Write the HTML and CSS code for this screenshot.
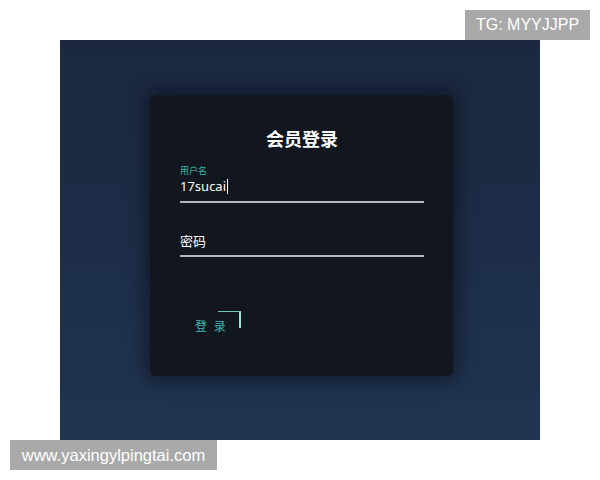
FILE: index.html
```html
<!DOCTYPE html>
<html lang="zh">
<head>
<meta charset="utf-8">
<link rel="stylesheet" href="styles.css">
</head>
<body>
<div class="page">
  <div class="panel">
    <div class="card">
      <h1 class="title">会员登录</h1>
      <div class="field">
        <div class="label">用户名</div>
        <div class="value value-user">17sucai<span class="caret"></span></div>
      </div>
      <div class="field field-pw">
        <div class="value">密码</div>
      </div>
      <div class="btn">
        <span class="btn-text">登 录</span>
        <span class="corner"></span>
      </div>
    </div>
  </div>
  <div class="wm wm-tg">TG: MYYJJPP</div>
  <div class="wm wm-url">www.yaxingylpingtai.com</div>
</div>
</body>
</html>
```

FILE: styles.css
```css
html, body { margin: 0; padding: 0; background: #ffffff; }
body { font-family: "Noto Sans CJK SC", "Noto Sans", sans-serif; }
.page { position: relative; width: 600px; height: 480px; padding: 40px 0 0 60px; box-sizing: border-box; }
.panel {
  width: 480px; height: 400px; box-sizing: border-box;
  padding: 55px 0 0 90px;
  background: linear-gradient(180deg, #1b2840 0%, #1d2d47 50%, #203450 100%);
}
.card {
  width: 303px; height: 281px; box-sizing: border-box;
  padding: 28px 29px 0 30px;
  background: #11161f;
  border-radius: 6px;
  box-shadow: 0 0 18px 4px rgba(8, 10, 16, 0.55);
}
.title { margin: 0; text-align: center; color: #ffffff; font-size: 18px; font-weight: 700; line-height: 30px; }
.field { margin-top: 12px; border-bottom: 2px solid #b6b8be; padding-bottom: 6px; }
.label { color: #3fb8b0; font-size: 9px; line-height: 11px; }
.value { color: #ffffff; font-size: 13px; line-height: 17px; font-family: "Noto Sans", "Noto Sans CJK SC", sans-serif; display: flex; align-items: center; }
.value-user { margin-top: 2px; }
.caret { display: inline-block; width: 1px; height: 15px; background: #ffffff; margin-left: 1px; }
.field-pw { margin-top: 30px; padding-bottom: 5px; }
.btn { position: relative; margin: 54px 0 0 15px; width: 46px; height: 17px; }
.btn-text { position: absolute; left: 0; top: 8px; color: #3fb8b0; font-size: 12px; line-height: 14px; letter-spacing: 2px; }
.corner { position: absolute; left: 23px; top: 0; width: 23px; height: 17px; border-top: 1px solid #6fc9c3; border-right: 2px solid #9adcd6; box-sizing: border-box; }
.wm { position: absolute; background: #a9a9a9; color: #ffffff; font-family: "Liberation Sans", Arial, sans-serif; font-size: 16px; line-height: 30px; }
.wm-tg { top: 10px; left: 465px; width: 125px; text-align: center; }
.wm-url { top: 440px; left: 10px; width: 207px; text-align: center; font-size: 16.5px; }
```
